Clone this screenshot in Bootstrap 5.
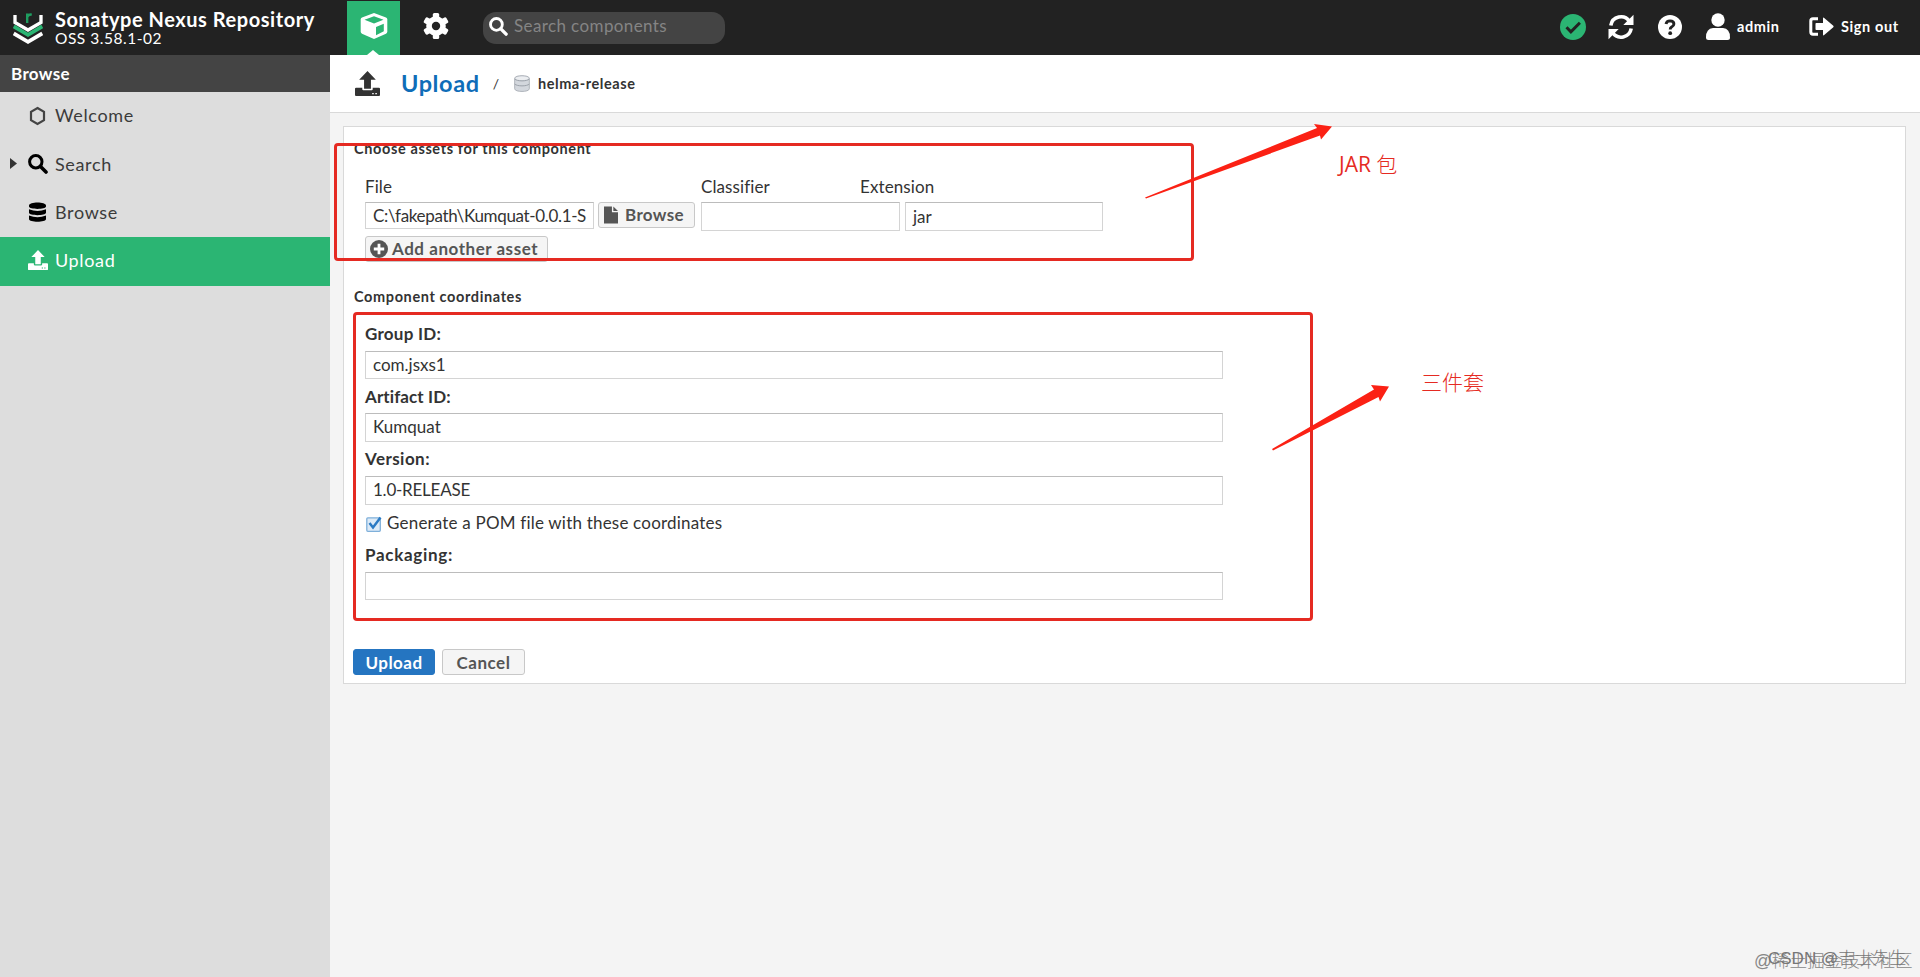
<!DOCTYPE html>
<html lang="en">
<head>
<meta charset="utf-8">
<meta name="viewport" content="width=device-width, initial-scale=1">
<title>Upload - Sonatype Nexus Repository</title>
<link href="https://cdn.jsdelivr.net/npm/bootstrap@5.3.0/dist/css/bootstrap.min.css" rel="stylesheet">
<style>
body{font-family:Lato,"Noto Sans CJK SC",sans-serif;font-size:17px;line-height:22px;color:#333;background:#f4f4f4;overflow:hidden;font-variant-ligatures:none;white-space:nowrap}
svg{display:block;flex:none}
.topbar{height:55px;background:#222;color:#fff}
.brand-logo{margin:11px 0 0 13px}
.brand-text{margin:8px 0 0 12px;width:292px}
.product{font-size:20px;font-weight:700;line-height:22px;letter-spacing:.55px}
.release{font-size:15.5px;line-height:16px;letter-spacing:.52px}
.mode{width:53px;height:54px;margin-top:1px;background:#2bb573}
.mode::after{content:"";position:absolute;left:20px;bottom:0;border:6px solid transparent;border-top:0;border-bottom:5px solid #fff}
.gear{margin:13px 34px 0 23px}
.quick{width:242px;height:32px;margin-top:12px;border-radius:13px;background:#444;color:#858585;font-size:17px;letter-spacing:.39px;padding:0 0 4px 6px}
.top-label{font-size:14.5px;font-weight:700;letter-spacing:.45px;line-height:20px}
.main-row{height:922px}
.side{width:330px;background:#ddd}
.side-title{height:37px;background:#444;color:#fff;font-weight:700;letter-spacing:.36px;padding:0 0 0 11px}
.side .nav-link{height:48.4px;padding:0 0 2px 28px;color:#3b3b3b;font-size:18px;letter-spacing:.65px;gap:8px}
.side .nav-link.active{background:#2bb573;color:#fff}
.crumb{height:58px;background:#fff;border-bottom:1px solid #d9d9d9;padding-left:25px}
.crumb-title{font-size:23.5px;font-weight:700;letter-spacing:.6px;color:#0f6db8;margin-left:21px;padding-bottom:1px}
.crumb-name{font-size:14.5px;font-weight:700;letter-spacing:.56px;margin-left:8px;padding-top:1px}
.panel{width:1563px;height:558px;margin:13px 0 0 13px;background:#fff;border:1px solid #d9d9d9;padding:12px 0 0 10px}
.sect{font-size:14.5px;font-weight:700;letter-spacing:.62px;line-height:20px}
.sect-body{padding-left:11px}
.heads{margin-top:17px;height:22px;letter-spacing:.1px}
.field{border:1px solid #d4d4d4;border-top-color:#bcbcbc;border-radius:0;padding:0 7px;height:29px;background:#fff;font-size:17px;line-height:26px;color:#333;width:858px}
.tool-btn{height:26px;border:1px solid #c8c8c8;border-radius:3px;background:#f5f5f5;color:#555;font-size:17px;font-weight:700;line-height:23px;padding:0 0 1px 5px}
.group{height:62.6px}
.group .field{height:28.6px}
.group label{font-weight:700;display:block;height:22px;margin-bottom:5.8px}
.mark-box{position:absolute;border:3px solid #e52a22;border-radius:4px}
.note{position:absolute;color:#e52a22;font-size:21px;line-height:30px;font-family:"Open Sans","Noto Sans CJK SC",sans-serif}
.note-cjk{font-weight:300}
.arrows{position:absolute;left:0;top:0;pointer-events:none}
.stamp{position:absolute;line-height:24px;color:#888;font-family:"Liberation Sans","Noto Sans CJK SC",sans-serif;font-weight:300}
</style>
</head>
<body>
<svg width="0" height="0" class="position-absolute">
<symbol id="tray" viewBox="0 0 24 24"><path d="M12 0 20 8.500H15.300V17H8.700V8.500H4Z"/><path d="M1 16H7V17.500Q7 18.500 8 18.500H16Q17 18.500 17 17.500V16H23Q24 16 24 17V23Q24 24 23 24H1Q0 24 0 23V17Q0 16 1 16ZM16.500 21V22.300H18V21ZM19.500 21V22.300H21V21Z" fill-rule="evenodd"/></symbol>
<symbol id="lens" viewBox="0 0 20 20"><circle cx="7.800" cy="7.800" r="6.200" fill="none" stroke="currentColor" stroke-width="3"/><path d="M12.500 12.500 18 18" stroke="currentColor" stroke-width="3.600" stroke-linecap="round"/></symbol>
</svg>

<header class="topbar d-flex align-items-start">
  <svg class="brand-logo" width="30" height="34" viewBox="0 0 30 34" fill="none" stroke-width="3.800"><path d="M2 4V11.500L15 19 28 11.500V4" stroke="#fff" stroke-width="3.300"/><path d="M.7 15.500 15 23.800 29.300 15.500" stroke="#2bb573"/><path d="M.7 22.500 15 30.800 29.300 22.500" stroke="#fff"/><path d="M14.200 12V2.500M14.200 6Q15.200 3.200 18.800 3.600" stroke="#1f9d60" stroke-width="2.400"/></svg>
  <div class="brand-text"><div class="product">Sonatype Nexus Repository</div><div class="release">OSS 3.58.1-02</div></div>
  <div class="mode position-relative">
    <svg width="28" height="28" viewBox="0 0 28 28" style="margin:11px 0 0 13px"><path d="M14 1 26 5.500Q27.300 6 27.300 7.500V19.500Q27.300 21 26 21.700L14 27 2 21.700Q.7 21 .7 19.500V7.500Q.7 6 2 5.500Z" fill="#fff"/><path d="M14 4.300 23.500 7.700 14 11.500 4.500 7.700ZM16 15 23.800 11.700V19.300L16 23.200Z" fill="#2bb573"/></svg>
  </div>
  <svg class="gear" width="26" height="26" viewBox="0 0 26 26"><g fill="#fff"><circle cx="13" cy="13" r="9.800"/><rect x="9.800" y="0" width="6.400" height="26" rx="1.500"/><rect x="9.800" y="0" width="6.400" height="26" rx="1.500" transform="rotate(60 13 13)"/><rect x="9.800" y="0" width="6.400" height="26" rx="1.500" transform="rotate(120 13 13)"/></g><circle cx="13" cy="13" r="4.200" fill="#222"/></svg>
  <div class="quick d-flex align-items-center"><svg class="text-white" width="19" height="19"><use href="#lens"/></svg><span style="margin-left:6px">Search components</span></div>
  <div class="ms-auto d-flex align-items-center" style="height:53px;padding-right:21px">
    <svg width="26" height="26" viewBox="0 0 26 26"><circle cx="13" cy="13" r="13" fill="#2bb573"/><path d="m6.500 13.300 4.400 4.500 9-9" fill="none" stroke="#222" stroke-width="3"/></svg>
    <svg width="26" height="26" viewBox="0 0 26 26" style="margin-left:22px" fill="none" stroke="#fff" stroke-width="3.600"><path d="M2.800 11.500A10.300 10.300 0 0 1 21.500 7.400M23.200 14.500A10.300 10.300 0 0 1 4.500 18.600"/><path d="M25.500.8V11H15.300L18.500 7.800 22.300 4ZM.5 25.200V15H10.700L7.500 18.200 3.700 22Z" fill="#fff" stroke="none"/></svg>
    <svg width="24" height="24" viewBox="0 0 24 24" style="margin-left:24px"><circle cx="12" cy="12" r="12" fill="#fff"/><path d="M8 9Q8.600 5.900 12 5.900 15.900 6 15.900 9 15.900 10.800 13.600 12 12.200 12.800 12.200 14.500" fill="none" stroke="#222" stroke-width="2.900"/><circle cx="12.200" cy="18.200" r="1.900" fill="#222"/></svg>
    <svg width="24" height="28" viewBox="0 0 24 28" style="margin-left:24px" fill="#fff"><circle cx="12" cy="7" r="6.700"/><path d="M0 24.500Q0 15.500 7 15H17Q24 15.500 24 24.500 24 27 21.500 27H2.500Q0 27 0 24.500Z"/></svg>
    <span class="top-label" style="margin-left:7px;width:42px;letter-spacing:.6px">admin</span>
    <svg width="25" height="20" viewBox="0 0 25 20" style="margin-left:30px"><path d="M9 1.800H4Q1.800 1.800 1.800 4V15Q1.800 17.200 4 17.200H9" fill="none" stroke="#fff" stroke-width="3"/><path d="M7.300 6H14V1.500Q14 0 15.200.9L24.300 8.700Q25 9.500 24.300 10.300L15.200 18.100Q14 19 14 17.500V13H7.300Q6.500 13 6.500 12.200V6.800Q6.500 6 7.300 6Z" fill="#fff"/></svg>
    <span class="top-label" style="margin-left:7px;width:58px;letter-spacing:.62px">Sign out</span>
  </div>
</header>

<div class="main-row d-flex">
  <aside class="side">
    <div class="side-title d-flex align-items-center">Browse</div>
    <nav class="nav flex-column flex-nowrap">
      <a class="nav-link d-flex align-items-center" href="#"><svg width="19" height="20" viewBox="0 0 19 20" style="margin-top:2px"><path d="M9.500 2 16 5.900V14.100L9.500 18 3 14.100V5.900Z" fill="none" stroke="#444" stroke-width="2.200"/></svg>Welcome</a>
      <a class="nav-link d-flex align-items-center position-relative" href="#"><svg class="position-absolute" style="left:10px" width="7" height="11"><path d="M0 0 7 5.500 0 11Z" fill="#333"/></svg><svg width="20" height="20" class="text-black" style="margin-right:-1px"><use href="#lens"/></svg>Search</a>
      <a class="nav-link d-flex align-items-center" href="#"><svg width="19" height="20" viewBox="0 0 19 20"><path d="M1 3.500C1-.4 18-.4 18 3.500V4.500C18 7.700 1 7.700 1 4.500ZM1 7.300Q9.500 10.600 18 7.300V10.800C18 14 1 14 1 10.800ZM1 13.600Q9.500 16.900 18 13.600V17C18 20.600 1 20.600 1 17Z" fill="#000"/></svg>Browse</a>
      <a class="nav-link active d-flex align-items-center" href="#"><svg width="20" height="20" fill="#fff" style="margin-right:-1px"><use href="#tray"/></svg>Upload</a>
    </nav>
  </aside>

  <main class="flex-grow-1">
    <div class="crumb d-flex align-items-center">
      <svg width="25" height="25" fill="#333"><use href="#tray"/></svg>
      <span class="crumb-title">Upload</span>
      <span style="margin-left:13px;font-size:14px">/</span>
      <svg width="16" height="17" viewBox="0 0 16 17" style="margin-left:15px"><path d="M.7 3.300C.7-.2 15.300-.2 15.300 3.300V13.800C15.300 17.300.7 17.300.7 13.800Z" fill="#d3d7dd" stroke="#aeb3ba"/><path d="M.7 4C3 6.500 13 6.500 15.300 4M.7 9C3 11.500 13 11.500 15.300 9" fill="none" stroke="#9ca2aa"/><ellipse cx="8" cy="3.300" rx="6.400" ry="1.800" fill="#eceef1"/></svg>
      <span class="crumb-name">helma-release</span>
    </div>

    <section class="panel">
      <div class="sect">Choose assets for this component</div>
      <div class="sect-body">
        <div class="heads d-flex"><span style="width:336px">File</span><span style="width:159px">Classifier</span><span>Extension</span></div>
        <div class="d-flex align-items-start" style="margin-top:4px">
          <div class="field overflow-hidden" style="width:229px;height:27px;line-height:25px;letter-spacing:-.34px">C:\fakepath\Kumquat-0.0.1-S</div>
          <div class="tool-btn d-flex align-items-center" style="width:97px;margin-left:4px;letter-spacing:.36px"><svg width="14" height="18" viewBox="0 0 15 18" fill="#555"><path d="M0 0H8.500V6H15V18H0ZM10 0 15 4.800H10Z"/></svg><span style="margin-left:7px">Browse</span></div>
          <div class="field" style="width:199px;margin-left:6px"></div>
          <div class="field" style="width:198px;margin-left:5px;line-height:27px">jar</div>
        </div>
        <div class="tool-btn d-flex align-items-center" style="width:183px;margin-top:5px;letter-spacing:.54px;padding-left:4px"><svg width="18" height="18" viewBox="0 0 18 18"><circle cx="9" cy="9" r="9" fill="#555"/><path d="M9 3.800V14.200M3.800 9H14.200" stroke="#fff" stroke-width="2.800"/></svg><span style="margin-left:4px">Add another asset</span></div>
      </div>
      <div class="sect" style="margin-top:25px">Component coordinates</div>
      <div class="sect-body" style="padding-top:16px">
        <div class="group"><label style="letter-spacing:.25px">Group ID:</label><div class="field">com.jsxs1</div></div>
        <div class="group"><label style="letter-spacing:.1px">Artifact ID:</label><div class="field">Kumquat</div></div>
        <div class="group"><label style="letter-spacing:.45px">Version:</label><div class="field" style="letter-spacing:-.24px">1.0-RELEASE</div></div>
        <div class="d-flex align-items-center" style="height:33px;padding-bottom:9px;letter-spacing:.2px"><svg width="16" height="16" viewBox="0 0 16 16" style="margin:2px 5px 0 1px"><rect x=".8" y="1.800" width="13.500" height="13.500" rx="1" fill="#dceaf7" stroke="#7fb0da" stroke-width="1.300"/><path d="m3.500 7 3.500 4.500L14.500 1.500" fill="none" stroke="#2a7ac4" stroke-width="2.500"/></svg>Generate a POM file with these coordinates</div>
        <div class="group"><label style="letter-spacing:.7px">Packaging:</label><div class="field"></div></div>
      </div>
      <div class="d-flex" style="margin-top:43px;margin-left:-1px">
        <div class="tool-btn d-flex align-items-center justify-content-center p-0 text-white" style="width:82px;background:#2575c1;border-color:#2575c1;letter-spacing:.46px">Upload</div>
        <div class="tool-btn d-flex align-items-center justify-content-center p-0" style="width:83px;margin-left:7px;letter-spacing:.53px">Cancel</div>
      </div>
    </section>
  </main>
</div>

<div class="mark-box" style="left:334px;top:143px;width:860px;height:118px"></div>
<div class="mark-box" style="left:353px;top:312px;width:960px;height:309px"></div>
<svg class="arrows" width="1920" height="977" fill="#fb2114"><path d="M1145 197.500 1317 128 1314 124 1332 126.500 1321 139.500 1320 135.500 1146 198.500ZM1272 449 1374 389.500 1371 385 1389 386.500 1380 401.500 1378.500 397 1273 450.500Z"/></svg>
<div class="note" style="left:1339px;top:149px">JAR <span class="note-cjk">包</span></div>
<div class="note note-cjk" style="left:1421px;top:367px">三件套</div>
<div class="stamp" style="left:1754px;top:949px;font-size:17.600px">@稀土掘金技术社区</div>
<div class="stamp" style="left:1768px;top:947px;font-size:17px;color:#777">CSDN @吉士先生</div>
<script src="https://cdn.jsdelivr.net/npm/bootstrap@5.3.0/dist/js/bootstrap.bundle.min.js"></script>
</body>
</html>
